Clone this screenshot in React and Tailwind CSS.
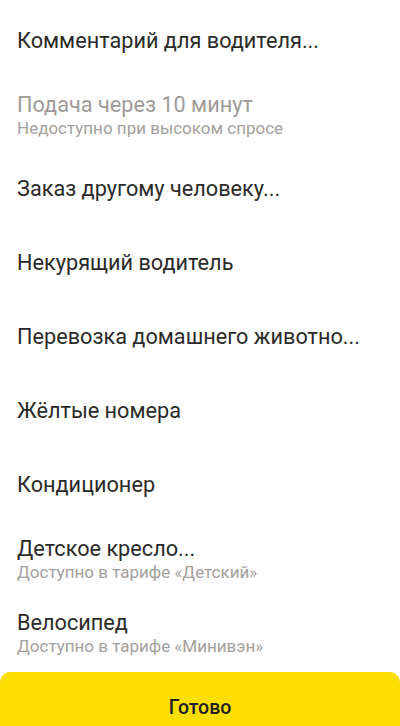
import React from 'react';

const options = [
  { title: 'Комментарий для водителя...' },
  { title: 'Подача через 10 минут', sub: 'Недоступно при высоком спросе', disabled: true },
  { title: 'Заказ другому человеку...' },
  { title: 'Некурящий водитель' },
  { title: 'Перевозка домашнего животно...' },
  { title: 'Жёлтые номера' },
  { title: 'Кондиционер' },
  { title: 'Детское кресло...', sub: 'Доступно в тарифе «Детский»' },
  { title: 'Велосипед', sub: 'Доступно в тарифе «Минивэн»' },
];

const App = () => {
  return (
    <div className="w-[400px] h-[726px] bg-white flex flex-col overflow-hidden font-['Roboto',sans-serif]">
      <div className="flex-1 flex flex-col pt-[4px]">
        {options.map((o) => (
          <div key={o.title} className="h-[74px] px-[17px] flex flex-col justify-center">
            <div className={`text-[21.7px] leading-[26px] whitespace-nowrap ${o.disabled ? 'text-[#9e9b98]' : 'text-[#2b2a29]'}`}>
              {o.title}
            </div>
            {o.sub && (
              <div className="text-[17px] leading-[21px] text-[#a3a09d] whitespace-nowrap">{o.sub}</div>
            )}
          </div>
        ))}
      </div>
      <button className="h-[54px] shrink-0 bg-[#fcdf00] rounded-t-[10px] text-[19.5px] font-medium text-[#21201f] flex items-center justify-center pt-[18px] pb-0">
        Готово
      </button>
    </div>
  );
};

export default App;
